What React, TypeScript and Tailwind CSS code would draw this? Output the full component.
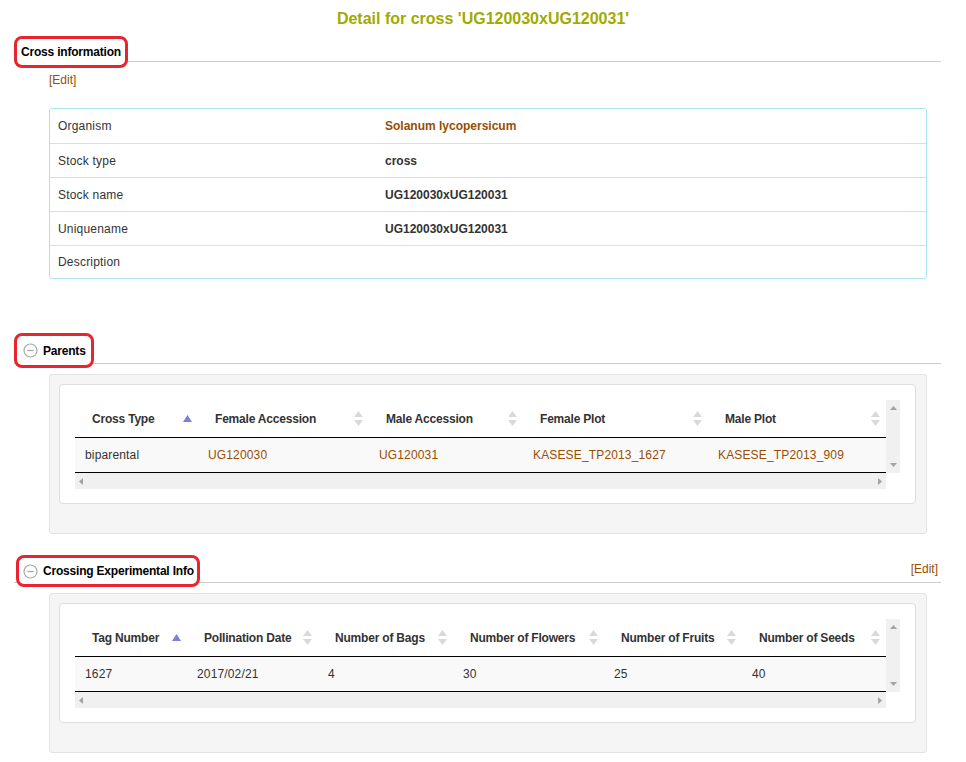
import React from "react";

const font = { fontFamily: '"Liberation Sans", Arial, sans-serif' };

function MinusIcon() {
  return (
    <svg width="15" height="15" viewBox="0 0 15 15" className="shrink-0">
      <circle cx="7.5" cy="7.5" r="6.5" fill="white" stroke="#a8a8a8" strokeWidth="1.2" />
      <line x1="4.3" y1="7.5" x2="10.7" y2="7.5" stroke="#a8a8a8" strokeWidth="1.2" />
    </svg>
  );
}

function SortAsc() {
  return (
    <svg width="9" height="7" viewBox="0 0 9 7" className="shrink-0">
      <polygon points="4.5,0 9,7 0,7" fill="#7c7fdc" />
    </svg>
  );
}

function SortBoth() {
  return (
    <svg width="9" height="16" viewBox="0 0 9 16" className="shrink-0">
      <polygon points="4.5,0 9,6 0,6" fill="#d9d9d9" />
      <polygon points="0,9 9,9 4.5,15" fill="#d9d9d9" />
    </svg>
  );
}

function Tri({ dir }: { dir: "up" | "down" | "left" | "right" }) {
  const pts = {
    up: "0,4 7,4 3.5,0",
    down: "0,0 7,0 3.5,4",
    left: "4,0 4,7 0,3.5",
    right: "0,0 0,7 4,3.5",
  }[dir];
  const vertical = dir === "up" || dir === "down";
  return (
    <svg width={vertical ? 7 : 4} height={vertical ? 4 : 7} viewBox={vertical ? "0 0 7 4" : "0 0 4 7"}>
      <polygon points={pts} fill="#a3a3a3" />
    </svg>
  );
}

function SectionHeader({
  title,
  icon,
  boxClass,
  edit,
}: {
  title: string;
  icon?: boolean;
  boxClass: string;
  edit?: boolean;
}) {
  return (
    <div className="flex items-end justify-between border-b border-[#cccccc]">
      <div
        className={`relative z-10 flex items-center gap-[5px] bg-white border-[3px] border-[#e8242f] rounded-[8px] ${boxClass}`}
      >
        {icon && <MinusIcon />}
        <span className="text-[12px] font-bold text-black tracking-[-0.2px]">{title}</span>
      </div>
      {edit && <span className="text-[12px] text-[#994d00] pr-[3px] pb-[4px]">[Edit]</span>}
    </div>
  );
}

type Col = { label: string; w: number; active?: boolean };

function DataTable({ cols, row, links }: { cols: Col[]; row: string[]; links?: boolean[] }) {
  return (
    <div className="bg-[#f5f5f5] border border-[#e3e3e3] rounded-[3px] pt-[9px] pl-[9px] pr-[10px] pb-[29px]">
      <div className="bg-white border border-[#dddddd] rounded-[4px] pt-[15px] pl-[15px] pr-[14px] pb-[14px]">
        <div className="grid grid-cols-[811px_14px]">
          <div>
            <div className="flex h-[38px] border-b border-black">
              {cols.map((c) => (
                <div
                  key={c.label}
                  style={{ width: c.w }}
                  className="flex items-center justify-between pl-[17px] pr-[6px] text-[12px] font-bold text-[#333] tracking-[-0.2px]"
                >
                  <span>{c.label}</span>
                  {c.active ? <SortAsc /> : <SortBoth />}
                </div>
              ))}
            </div>
            <div className="flex h-[35px] bg-[#f9f9f9] border-b border-black">
              {row.map((v, i) => (
                <div
                  key={i}
                  style={{ width: cols[i].w }}
                  className={`flex items-center pl-[10px] text-[12px] tracking-[0.15px] ${
                    links && links[i] ? "text-[#994d00]" : "text-[#333]"
                  }`}
                >
                  {v}
                </div>
              ))}
            </div>
          </div>
          <div className="bg-[#f0f0f0] flex flex-col items-center justify-between py-[6px]">
            <Tri dir="up" />
            <Tri dir="down" />
          </div>
          <div className="h-[16px] bg-[#f0f0f0] flex items-center justify-between px-[4px]">
            <Tri dir="left" />
            <Tri dir="right" />
          </div>
          <div />
        </div>
      </div>
    </div>
  );
}

const infoRows: { label: string; value: string; link?: boolean; h: string }[] = [
  { label: "Organism", value: "Solanum lycopersicum", link: true, h: "h-[35px] border-b border-[#dddddd]" },
  { label: "Stock type", value: "cross", h: "h-[34px] border-b border-[#dddddd]" },
  { label: "Stock name", value: "UG120030xUG120031", h: "h-[34px] border-b border-[#dddddd]" },
  { label: "Uniquename", value: "UG120030xUG120031", h: "h-[34px] border-b border-[#dddddd]" },
  { label: "Description", value: "", h: "h-[32px]" },
];

export default function App() {
  return (
    <div style={font} className="w-[966px] min-h-[762px] bg-white text-[#333]">
      <div className="pt-[9px] h-[29px] text-center">
        <h1 className="text-[16px] leading-[20px] font-bold text-[#9fab00]">
          Detail for cross 'UG120030xUG120031'
        </h1>
      </div>

      <div className="ml-[14px] w-[927px]">
        {/* Cross information */}
        <SectionHeader title="Cross information" boxClass="h-[32px] -mb-[7px] pl-[4px] pr-[4px] mt-[7px]" />
        <div className="pl-[35px] pr-[14px]">
          <div className="mt-[10px] h-[16px] leading-[16px] text-[12px] text-[#994d00]">[Edit]</div>
          <div className="mt-[20px] border border-[#aee4ee] rounded-[3px]">
            {infoRows.map((r) => (
              <div key={r.label} className={`flex items-center text-[12px] ${r.h}`}>
                <div className="w-[335px] pl-[8px] text-[#333] tracking-[0.2px]">{r.label}</div>
                <div className={`font-bold ${r.link ? "text-[#994d00]" : "text-[#333]"}`}>{r.value}</div>
              </div>
            ))}
          </div>
        </div>

        {/* Parents */}
        <div className="mt-[54px]">
          <SectionHeader title="Parents" icon boxClass="h-[35px] -mb-[5px] pl-[6px] pr-[5px]" />
        </div>
        <div className="pl-[35px] pr-[14px] mt-[10px]">
          <DataTable
            cols={[
              { label: "Cross Type", w: 123, active: true },
              { label: "Female Accession", w: 171 },
              { label: "Male Accession", w: 154 },
              { label: "Female Plot", w: 185 },
              { label: "Male Plot", w: 178 },
            ]}
            row={["biparental", "UG120030", "UG120031", "KASESE_TP2013_1627", "KASESE_TP2013_909"]}
            links={[false, true, true, true, true]}
          />
        </div>

        {/* Crossing Experimental Info */}
        <div className="mt-[21px]">
          <SectionHeader
            title="Crossing Experimental Info"
            icon
            edit
            boxClass="h-[32px] -mb-[5px] ml-[2px] pl-[4px] pr-[3px]"
          />
        </div>
        <div className="pl-[35px] pr-[14px] mt-[10px]">
          <DataTable
            cols={[
              { label: "Tag Number", w: 112, active: true },
              { label: "Pollination Date", w: 131 },
              { label: "Number of Bags", w: 135 },
              { label: "Number of Flowers", w: 151 },
              { label: "Number of Fruits", w: 138 },
              { label: "Number of Seeds", w: 144 },
            ]}
            row={["1627", "2017/02/21", "4", "30", "25", "40"]}
          />
        </div>
      </div>
    </div>
  );
}
